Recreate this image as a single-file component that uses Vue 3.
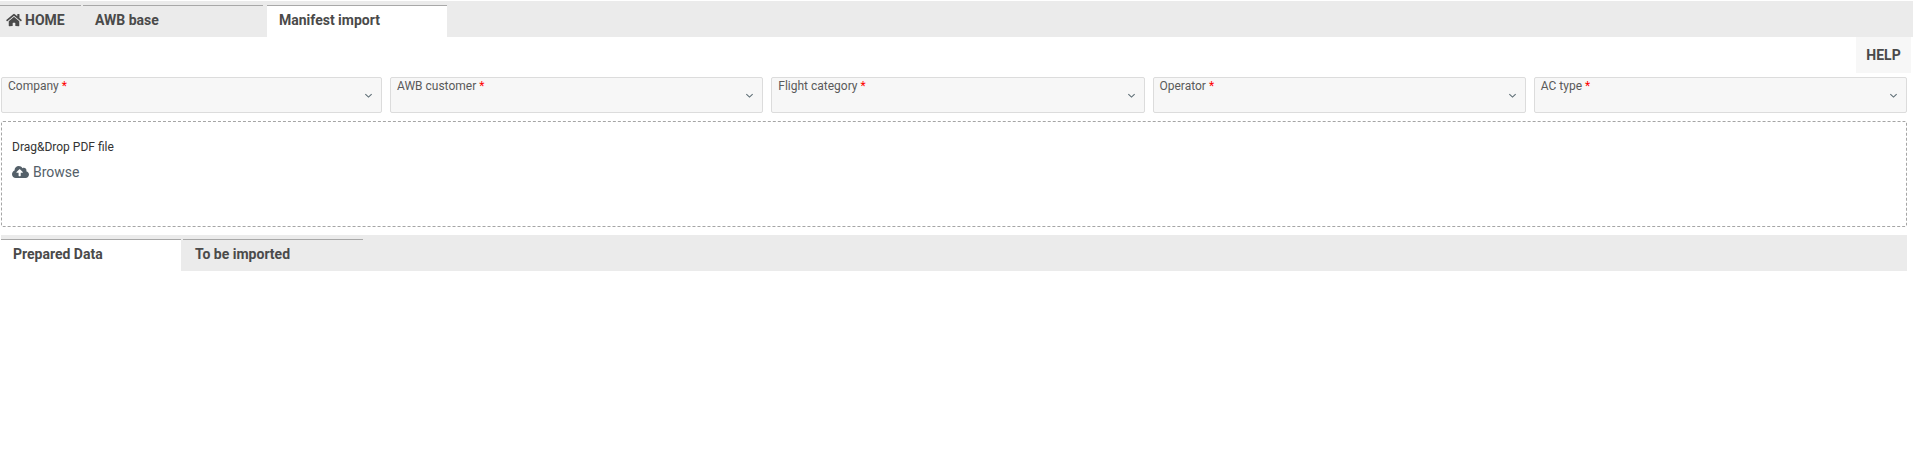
<script setup>
const fields = ['Company', 'AWB customer', 'Flight category', 'Operator', 'AC type']
</script>

<template>
  <div class="page">
    <div class="tabbar top">
      <div class="tab home">
        <svg class="home-icon" viewBox="0 0 576 512"><path fill="currentColor" d="M280.37 148.26L96 300.11V464a16 16 0 0 0 16 16l112.06-.29a16 16 0 0 0 15.92-16V368a16 16 0 0 1 16-16h64a16 16 0 0 1 16 16v95.64a16 16 0 0 0 16 16.05L464 480a16 16 0 0 0 16-16V300L295.67 148.26a12.19 12.19 0 0 0-15.3 0zM571.6 251.47L488 182.56V44.05a12 12 0 0 0-12-12h-56a12 12 0 0 0-12 12v72.61L318.47 43a48 48 0 0 0-61 0L4.34 251.47a12 12 0 0 0-1.6 16.9l25.5 31A12 12 0 0 0 45.15 301l235.22-193.74a12.19 12.19 0 0 1 15.3 0L530.9 301a12 12 0 0 0 16.9-1.6l25.5-31a12 12 0 0 0-1.7-16.93z"/></svg>
        <span>HOME</span>
      </div>
      <div class="tab awb">AWB base</div>
      <div class="tab manifest active">Manifest import</div>
    </div>

    <div class="help-row"><div class="help">HELP</div></div>

    <div class="content">
      <div class="fields">
        <div v-for="f in fields" :key="f" class="select">
          <span class="label">{{ f }} <span class="req">*</span></span>
          <svg class="chev" viewBox="0 0 10 6"><path d="M1.5 1l3.5 3.2L8.5 1" fill="none" stroke="currentColor" stroke-width="1.2"/></svg>
        </div>
      </div>

      <div class="drop">
        <div class="drop-title">Drag&amp;Drop PDF file</div>
        <div class="browse">
          <svg class="cloud" viewBox="0 0 640 512"><path fill="currentColor" d="M537.6 226.6c4.1-10.7 6.4-22.4 6.4-34.6 0-53-43-96-96-96-19.7 0-38.1 6-53.3 16.2C367 64.2 315.3 32 256 32c-88.4 0-160 71.6-160 160 0 2.7.1 5.4.2 8.1C40.2 219.8 0 273.2 0 336c0 79.5 64.5 144 144 144h368c70.7 0 128-57.3 128-128 0-61.9-44-113.6-102.4-125.4zM393.4 288H328v112c0 8.8-7.2 16-16 16h-48c-8.8 0-16-7.2-16-16V288h-65.4c-14.3 0-21.4-17.2-11.3-27.3l105.4-105.4c6.2-6.2 16.4-6.2 22.6 0l105.4 105.4c10.1 10.1 3 27.3-11.3 27.3z"/></svg>
          <span>Browse</span>
        </div>
      </div>

      <div class="tabbar lower">
        <div class="tab prepared active">Prepared Data</div>
        <div class="tab imported">To be imported</div>
      </div>
    </div>
  </div>
</template>

<style scoped>
.page {
  height: 475px;
  background: #fff;
  padding-top: 1px;
  box-sizing: border-box;
  font-family: Roboto, "Liberation Sans", sans-serif;
  color: #4a4a4a;
  overflow: hidden;
}
.tabbar {
  display: flex;
  height: 36px;
  background: #ebebeb;
  padding-top: 4px;
  box-sizing: border-box;
}
.tab {
  width: 180px;
  height: 32px;
  box-sizing: border-box;
  border-top: 1px solid #a8a8a8;
  font-size: 14px;
  font-weight: 700;
  line-height: 29px;
  padding-left: 12px;
  white-space: nowrap;
}
.tab.active { background: #fff; }
.home {
  width: 81px;
  padding-left: 6px;
  display: flex;
  align-items: center;
  gap: 3px;
  line-height: normal;
  padding-bottom: 3px;
}
.home-icon { width: 16px; height: 14px; }
.awb { margin-left: 2px; }
.manifest { margin-left: 4px; }
.help-row {
  display: flex;
  justify-content: flex-end;
  padding-right: 2px;
  height: 36px;
}
.help {
  width: 55px;
  height: 36px;
  background: #f7f7f7;
  font-size: 14px;
  font-weight: 700;
  line-height: 36px;
  text-align: center;
}
.content {
  padding: 4px 6px 0 1px;
}
.fields {
  display: flex;
  gap: 8px;
}
.select {
  flex: 373.5 1 0;
  height: 36px;
  box-sizing: border-box;
  position: relative;
  background: #f7f7f7;
  border: 1px solid #dcdcdc;
  border-radius: 2px;
  padding: 0 6px;
  font-size: 12px;
  line-height: 16px;
  color: #5a5a5a;
}
.select:first-child { flex: 0 0 381px; }
.req { color: #f00; }
.chev {
  position: absolute;
  right: 8px;
  top: 15px;
  width: 9px;
  height: 6px;
  color: #5b6b73;
}
.drop {
  margin-top: 8px;
  height: 106px;
  box-sizing: border-box;
  border: 1px dashed #a5a5a5;
  border-radius: 2px;
  padding: 17px 10px 0;
}
.drop-title {
  font-size: 12px;
  line-height: 16px;
  color: #333;
}
.browse {
  margin-top: 8px;
  display: flex;
  align-items: center;
  gap: 4px;
  font-size: 14px;
  line-height: 18px;
  color: #546069;
}
.cloud { width: 17px; height: 14px; }
.lower {
  margin-top: 8px;
}
.prepared { width: 180px; }
.imported { margin-left: 2px; }
</style>
